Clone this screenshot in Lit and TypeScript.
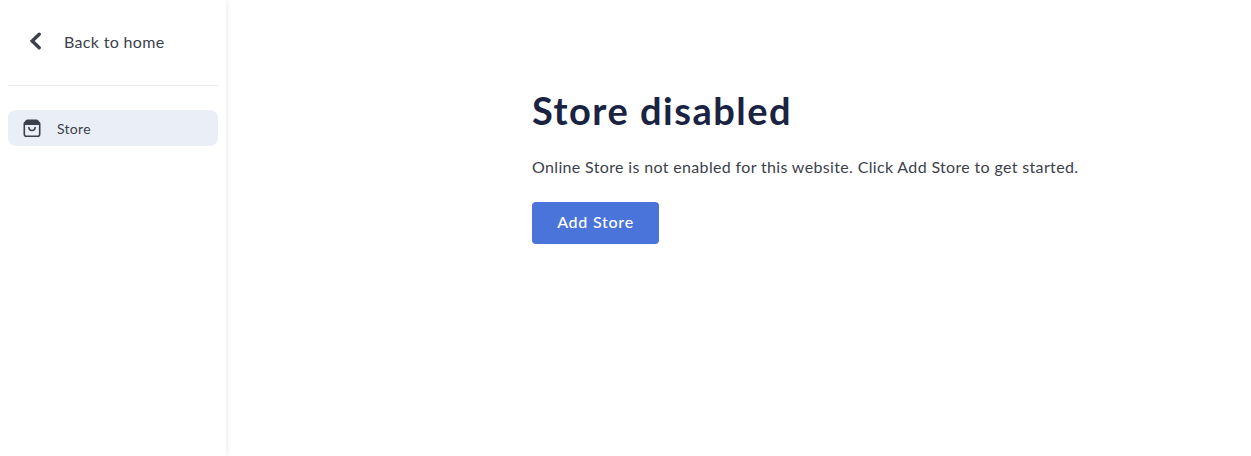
import { LitElement, html, css } from "lit";
import { customElement } from "lit/decorators.js";

@customElement("app-root")
export class AppRoot extends LitElement {
  static styles = css`
    :host {
      display: flex;
      height: 456px;
      overflow: hidden;
      background: #fff;
      font-family: "Lato", "Noto Sans", sans-serif;
      color: #3c3f4c;
    }
    .side {
      width: 226px;
      flex: none;
      box-sizing: border-box;
      padding: 0 8px;
      box-shadow: 2px 0 4px rgba(30, 40, 70, 0.07);
    }
    .back {
      height: 86px;
      box-sizing: border-box;
      padding-bottom: 3px;
      display: flex;
      align-items: center;
      border-bottom: 1px solid #e8e8ea;
    }
    .back svg { width: 14px; height: 18px; margin-left: 21px; margin-right: 21px; flex: none; }
    .back span { font-size: 16px; letter-spacing: 0.33px; }
    .item {
      margin-top: 24px;
      height: 36px;
      display: flex;
      align-items: center;
      background: #eaeff7;
      border-radius: 8px;
      font-size: 14px;
      letter-spacing: 0.3px;
    }
    .item svg { width: 18px; height: 18px; margin-left: 15px; margin-right: 16px; flex: none; }
    .main {
      flex: 1;
      padding: 86px 0 0 306px;
    }
    h1 {
      margin: 0;
      font-size: 38px;
      line-height: 48px;
      font-weight: 700;
      color: #1a2342;
      letter-spacing: 1.5px;
    }
    p {
      margin: 21px 0 0;
      font-size: 16px;
      line-height: 24px;
      letter-spacing: 0.345px;
    }
    button {
      display: block;
      margin-top: 23px;
      width: 127px;
      height: 42px;
      border: 0;
      border-radius: 4px;
      background: #4a74d9;
      color: #fff;
      font: 500 16px "Lato", sans-serif;
      letter-spacing: 0.75px;
      padding: 0 0 4px;
    }
  `;

  render() {
    return html`
      <aside class="side">
        <div class="back">
          <svg viewBox="0 0 14 18" fill="none" stroke="#3c3f4c" stroke-width="3.4" stroke-linecap="round" stroke-linejoin="miter">
            <path d="M10.2 2.2 L3.2 9 L10.2 15.8" />
          </svg>
          <span>Back to home</span>
        </div>
        <div class="item">
          <svg viewBox="0 0 18 18" fill="none">
            <path d="M4.6 0.6 H13.4 Q15.4 0.6 16 2.6 L16.8 6 H1.2 L2 2.6 Q2.6 0.6 4.6 0.6Z" fill="#3c3f4c" />
            <rect x="1.3" y="3" width="15.4" height="14.2" rx="2" stroke="#3c3f4c" stroke-width="1.6" />
            <path d="M5.8 8.4 Q6.2 11.6 9 11.6 Q11.8 11.6 12.2 8.4" stroke="#3c3f4c" stroke-width="1.5" stroke-linecap="round" />
          </svg>
          <span>Store</span>
        </div>
      </aside>
      <main class="main">
        <h1>Store disabled</h1>
        <p>Online Store is not enabled for this website. Click Add Store to get started.</p>
        <button>Add Store</button>
      </main>
    `;
  }
}
